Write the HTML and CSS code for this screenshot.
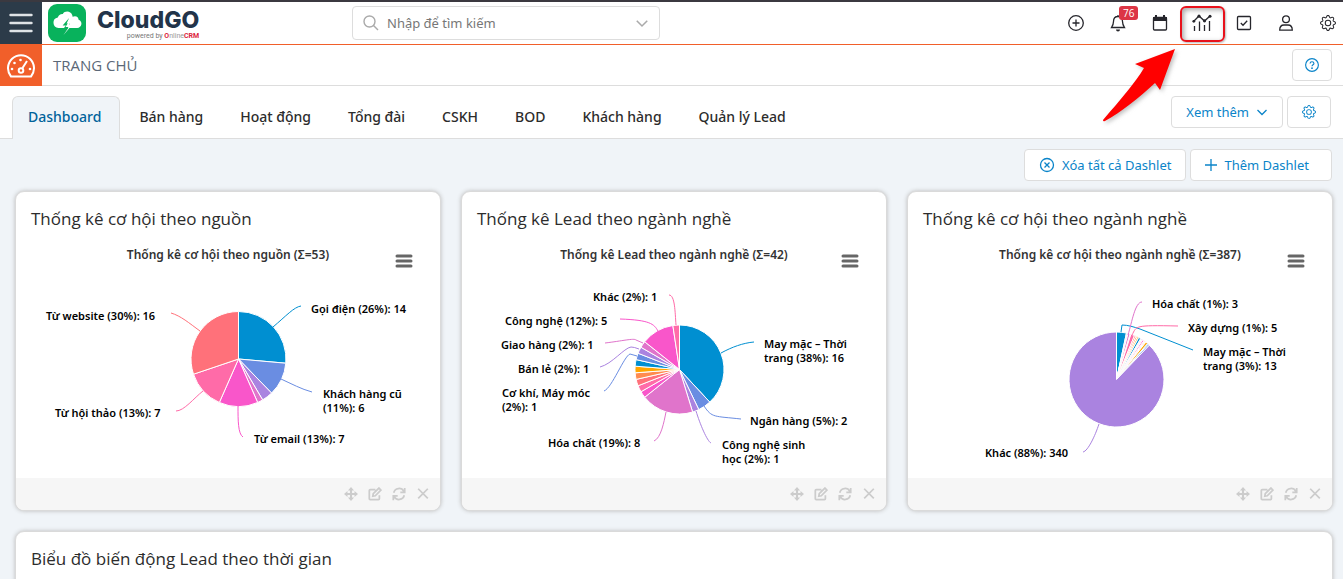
FILE: index.html
```html
<!DOCTYPE html>
<html lang="vi">
<head>
  <meta charset="UTF-8">
  <title>CloudGO - Trang chủ</title>
  <link rel="stylesheet" href="styles.css">
</head>
<body>
  <!-- shared icons -->
  <svg class="sprite" aria-hidden="true">
    <symbol id="i-gear" viewBox="0 0 16 16">
      <path d="M8 4.754a3.246 3.246 0 1 0 0 6.492 3.246 3.246 0 0 0 0-6.492zM5.754 8a2.246 2.246 0 1 1 4.492 0 2.246 2.246 0 0 1-4.492 0z"/>
      <path d="M9.796 1.343c-.527-1.79-3.065-1.79-3.592 0l-.094.319a.873.873 0 0 1-1.255.52l-.292-.16c-1.64-.892-3.433.902-2.54 2.541l.159.292a.873.873 0 0 1-.52 1.255l-.319.094c-1.79.527-1.79 3.065 0 3.592l.319.094a.873.873 0 0 1 .52 1.255l-.16.292c-.892 1.64.901 3.434 2.541 2.54l.292-.159a.873.873 0 0 1 1.255.52l.094.319c.527 1.79 3.065 1.79 3.592 0l.094-.319a.873.873 0 0 1 1.255-.52l.292.16c1.64.893 3.434-.902 2.54-2.541l-.159-.292a.873.873 0 0 1 .52-1.255l.319-.094c1.79-.527 1.79-3.065 0-3.592l-.319-.094a.873.873 0 0 1-.52-1.255l.16-.292c.893-1.64-.902-3.433-2.541-2.54l-.292.159a.873.873 0 0 1-1.255-.52l-.094-.319zm-2.633.283c.246-.835 1.428-.835 1.674 0l.094.319a1.873 1.873 0 0 0 2.693 1.115l.291-.16c.764-.415 1.6.42 1.184 1.185l-.159.292a1.873 1.873 0 0 0 1.116 2.692l.318.094c.835.246.835 1.428 0 1.674l-.319.094a1.873 1.873 0 0 0-1.115 2.693l.16.291c.415.764-.42 1.6-1.185 1.184l-.291-.159a1.873 1.873 0 0 0-2.693 1.116l-.094.318c-.246.835-1.428.835-1.674 0l-.094-.319a1.873 1.873 0 0 0-2.692-1.115l-.292.16c-.764.415-1.6-.42-1.184-1.185l.159-.291A1.873 1.873 0 0 0 1.945 8.93l-.319-.094c-.835-.246-.835-1.428 0-1.674l.319-.094A1.873 1.873 0 0 0 3.06 4.377l-.16-.292c-.415-.764.42-1.6 1.185-1.184l.292.159a1.873 1.873 0 0 0 2.692-1.115l.094-.319z"/>
    </symbol>
    <symbol id="i-chevron" viewBox="0 0 12 12"><path class="line" d="M1.500 4 6 8.500 10.500 4"/></symbol>
    <symbol id="i-move" viewBox="0 0 16 16"><path d="M8 0l3.500 4H9.200v2.800H12V4.500L16 8l-4 3.500V9.200H9.200V12h2.300L8 16l-3.500-4h2.300V9.200H4v2.300L0 8l4-3.500v2.300h2.800V4H4.500z"/></symbol>
    <symbol id="i-edit" viewBox="0 0 16 16"><path class="line thick" d="M8.500 3H2.500Q1.500 3 1.500 4v9.500q0 1 1 1H12q1 0 1-1V9.500M5.500 10.500l.500-2.800L12.500 1.200l2.300 2.300L8.300 10z"/></symbol>
    <symbol id="i-refresh" viewBox="0 0 16 16"><path class="line thick" d="M2 6.500A6.200 6.200 0 0 1 13.500 5M14.500 1v5h-5M14 9.500A6.200 6.200 0 0 1 2.500 11M1.500 15v-5h5"/></symbol>
    <symbol id="i-close" viewBox="0 0 16 16"><path class="line thick" d="M2.500 2 13.500 13M13.500 2 2.500 13"/></symbol>
  </svg>

  <header class="topbar">
    <button class="menu-toggle" aria-label="Menu">
      <svg width="24" height="20" viewBox="0 0 24 20"><path d="M1.500 2h21M1.500 10h21M1.500 18h21"/></svg>
    </button>
    <a class="brand" href="#">
      <svg class="brand-logo" width="38" height="38" viewBox="0 0 38 38">
        <rect width="38" height="38" rx="9" fill="#08b25c"/>
        <path fill="#fff" d="M10.500 24a5.300 5.300 0 0 1-.700-10.500 5 5 0 0 1 5-3.500c2-3.500 8-3.300 9.500 1.200l.300 1.500c3.500-1.500 6 .500 6 3 4.500 1.500 3.500 8-1.500 8.300h-9l1.500-4.500h-3l2.500-5.500-6.500 7.500h3.200L16 24z"/>
        <path fill="#fff" d="M15.500 31l5.500-8h-3.500l4.500-7-1 5h3z"/>
      </svg>
      <span class="brand-text">
        <span class="brand-name">CloudGO</span>
        <span class="brand-by">powered by <b>O</b><i>nline</i><b>CRM</b></span>
      </span>
    </a>
    <label class="search">
      <svg width="16" height="16" viewBox="0 0 16 16"><circle cx="6.500" cy="6.500" r="5.500"/><path d="M10.500 10.500 15 15"/></svg>
      <input type="text" placeholder="Nhập để tìm kiếm" aria-label="Nhập để tìm kiếm">
      <svg width="14" height="14"><use href="#i-chevron"/></svg>
    </label>
    <nav class="actions">
      <button aria-label="Thêm nhanh"><svg width="16" height="16" viewBox="0 0 16 16"><path class="line" d="M8 4.500v7M4.500 8h7"/><circle class="line" cx="8" cy="8" r="7.300"/></svg></button>
      <button aria-label="Thông báo"><svg width="16" height="18" viewBox="0 0 16 18"><path class="line" d="M8 2.500c-3 0-4.500 2-4.500 5 0 3-1 4.500-2 6h13c-1-1.500-2-3-2-6 0-3-1.500-5-4.500-5zM8 1v1.500"/><path d="M6 15.500h4a2 2 0 0 1-4 0z"/></svg><span class="badge">76</span></button>
      <button aria-label="Lịch"><svg width="16" height="16" viewBox="0 0 16 16"><rect class="line" x="1.500" y="2.500" width="13" height="12.500" rx="1"/><path d="M1 2h14v4H1zM3 0h2v3H3zM11 0h2v3h-2z"/></svg></button>
      <button class="highlighted" aria-label="Báo cáo"><svg width="20" height="18" viewBox="0 0 20 18"><path class="line" d="M1.500 7.500 7 2l5.500 5L18 2"/><circle cx="1.800" cy="7.300" r="1.400"/><circle cx="7" cy="2.200" r="1.600"/><circle cx="12.500" cy="6.800" r="1.600"/><circle cx="18" cy="2.200" r="1.500"/><path class="line" d="M2.500 17v-5M7.500 17V7.500M12.500 17v-6M17.500 17V7"/></svg></button>
      <button aria-label="Công việc"><svg width="16" height="16" viewBox="0 0 16 16"><rect class="line" x="1.500" y="1.500" width="13" height="13" rx="1"/><path class="line" d="M4.800 8 7 10.200l4.200-4.500"/></svg></button>
      <button aria-label="Tài khoản"><svg width="16" height="16" viewBox="0 0 16 16"><circle class="line" cx="8" cy="4.200" r="3.400"/><path class="line" d="M1.700 15.200c0-3.400 2-5.200 4.300-5.200h4c2.300 0 4.300 1.800 4.300 5.200z"/></svg></button>
      <button aria-label="Cài đặt"><svg width="16" height="16"><use href="#i-gear"/></svg></button>
    </nav>
    <svg class="pointer" width="90" height="90" viewBox="0 0 90 90"><path d="M77 4 37 19l9 4C37 38 23 54 5 75q0 2 2 1C23 67 41 53 57 38l5 7z"/></svg>
  </header>

  <div class="modulebar">
    <a class="module-icon" href="#" aria-label="Trang chủ">
      <svg width="28" height="24" viewBox="0 0 28 24">
        <path d="M4 22.500A13 13 0 1 1 24 22.500zM15.500 14 20 7"/>
        <circle cx="14" cy="16.500" r="2.300"/>
        <g class="dots"><circle cx="5" cy="15" r="1.300"/><circle cx="7.500" cy="9" r="1.300"/><circle cx="13.500" cy="6" r="1.300"/><circle cx="23" cy="15" r="1.300"/></g>
      </svg>
    </a>
    <span class="module-name">TRANG CHỦ</span>
    <button class="btn btn-help" aria-label="Trợ giúp">
      <svg width="14" height="14" viewBox="0 0 16 16"><circle class="line" cx="8" cy="8" r="7.300"/><path class="line" d="M5.800 6.300C5.900 3.500 10.200 3.700 10.200 6.200 10.200 7.700 8 7.700 8 9.300"/><circle cx="8" cy="11.700" r="1"/></svg>
    </button>
  </div>

  <div class="tabbar">
    <nav class="tabs">
      <a class="active" href="#">Dashboard</a>
      <a href="#">Bán hàng</a>
      <a href="#">Hoạt động</a>
      <a href="#">Tổng đài</a>
      <a href="#">CSKH</a>
      <a href="#">BOD</a>
      <a href="#">Khách hàng</a>
      <a href="#">Quản lý Lead</a>
    </nav>
    <div class="tab-tools">
      <button class="btn btn-more">Xem thêm <svg width="12" height="12"><use href="#i-chevron"/></svg></button>
      <button class="btn btn-gear" aria-label="Tùy chỉnh"><svg width="14" height="14"><use href="#i-gear"/></svg></button>
    </div>
  </div>

  <main class="dashboard">
    <div class="toolbar">
      <button class="btn"><svg width="16" height="16" viewBox="0 0 16 16"><circle class="line" cx="8" cy="8" r="6.500"/><path class="line" d="M5.500 5.500l5 5M10.500 5.500l-5 5"/></svg> Xóa tất cả Dashlet</button>
      <button class="btn btn-add"><svg width="12" height="12" viewBox="0 0 12 12"><path class="line" d="M6 0v12M0 6h12"/></svg> Thêm Dashlet</button>
    </div>

    <div class="cards">
      <section class="card">
        <h2>Thống kê cơ hội theo nguồn</h2>
        <div class="chart">
          <button class="chart-menu" aria-label="Menu biểu đồ"><svg width="18" height="14" viewBox="0 0 18 14"><path d="M2 2h14M2 7h14M2 12h14"/></svg></button>
          <svg class="pie" viewBox="0 0 424 238">
            <text class="chart-title" x="212" y="19">Thống kê cơ hội theo nguồn (Σ=53)</text>
            <g class="slices" data-cx="222.500" data-cy="119" data-r="47.500" data-values="14,6,2,1,7,7,16"></g>
            <path class="c0" d="M257 87C270 76 278 67 285 66"/>
            <path class="c1" d="M265 139C276 144 285 149 296 152"/>
            <path class="c4" d="M222 166C222 180 222 194 227 197"/>
            <path class="c5" d="M187 151C178 158 168 171 160 171"/>
            <path class="c6" d="M155 73C165 76 173 83 184 91"/>
            <text x="295" y="73">Gọi điện (26%): 14</text>
            <text x="307" y="158">Khách hàng cũ<tspan x="307" dy="14">(11%): 6</tspan></text>
            <text x="238" y="203">Từ email (13%): 7</text>
            <text x="39" y="177">Từ hội thảo (13%): 7</text>
            <text x="30" y="80">Từ website (30%): 16</text>
          </svg>
        </div>
        <footer>
          <button aria-label="Di chuyển"><svg><use href="#i-move"/></svg></button>
          <button aria-label="Sửa"><svg><use href="#i-edit"/></svg></button>
          <button aria-label="Làm mới"><svg><use href="#i-refresh"/></svg></button>
          <button aria-label="Đóng"><svg><use href="#i-close"/></svg></button>
        </footer>
      </section>

      <section class="card">
        <h2>Thống kê Lead theo ngành nghề</h2>
        <div class="chart">
          <button class="chart-menu" aria-label="Menu biểu đồ"><svg width="18" height="14" viewBox="0 0 18 14"><path d="M2 2h14M2 7h14M2 12h14"/></svg></button>
          <svg class="pie" viewBox="0 0 424 238">
            <text class="chart-title" x="212" y="19">Thống kê Lead theo ngành nghề (Σ=42)</text>
            <g class="slices" data-cx="217.500" data-cy="129.500" data-r="44.500" data-values="16,2,1,8,1,1,1,1,1,1,1,1,1,5,1"></g>
            <path class="c0" d="M259 113C270 107 281 103 292 102"/>
            <path class="c1" d="M242 166C250 178 252 176 279 179"/>
            <path class="c2" d="M234 171C238 184 245 201 249 203"/>
            <path class="c3" d="M192 201C199 198 202 182 204 172"/>
            <path class="c1" d="M142 151C150 148 162 116 168 114L175 116"/>
            <path class="c2" d="M138 127C150 124 162 108 169 107Q172 107 177 109"/>
            <path class="c3" d="M143 103C160 101 172 98 174 100L181 103"/>
            <path class="c4" d="M158 79C188 80 192 84 196 91"/>
            <path class="c5" d="M207 55C213 55 213 72 214 85"/>
            <text x="302" y="108">May mặc – Thời<tspan x="302" dy="14">trang (38%): 16</tspan></text>
            <text x="288" y="185">Ngân hàng (5%): 2</text>
            <text x="260" y="209">Công nghệ sinh<tspan x="260" dy="14">học (2%): 1</tspan></text>
            <text x="86" y="207">Hóa chất (19%): 8</text>
            <text x="40" y="157">Cơ khí, Máy móc<tspan x="40" dy="14">(2%): 1</tspan></text>
            <text x="56" y="133">Bán lẻ (2%): 1</text>
            <text x="39" y="109">Giao hàng (2%): 1</text>
            <text x="43" y="85">Công nghệ (12%): 5</text>
            <text x="131" y="61">Khác (2%): 1</text>
          </svg>
        </div>
        <footer>
          <button aria-label="Di chuyển"><svg><use href="#i-move"/></svg></button>
          <button aria-label="Sửa"><svg><use href="#i-edit"/></svg></button>
          <button aria-label="Làm mới"><svg><use href="#i-refresh"/></svg></button>
          <button aria-label="Đóng"><svg><use href="#i-close"/></svg></button>
        </footer>
      </section>

      <section class="card">
        <h2>Thống kê cơ hội theo ngành nghề</h2>
        <div class="chart">
          <button class="chart-menu" aria-label="Menu biểu đồ"><svg width="18" height="14" viewBox="0 0 18 14"><path d="M2 2h14M2 7h14M2 12h14"/></svg></button>
          <svg class="pie" viewBox="0 0 424 238">
            <text class="chart-title" x="212" y="19">Thống kê cơ hội theo ngành nghề (Σ=387)</text>
            <g class="slices" data-cx="208.500" data-cy="139.500" data-r="47.500" data-values="13,1,1,3,1,5,2,2,2,3,1,1,1,2,1,1,1,3,1,2,340"></g>
            <path class="c0" d="M213 92L214 85C220 85 226 87 232 89L285 110"/>
            <path class="c5" d="M270 86C225 85 229 86 224 95"/>
            <path class="c3" d="M234 62C227 62 224 82 220 95"/>
            <path class="c2" d="M175 212C180 211 187 196 191 184"/>
            <text x="244" y="68">Hóa chất (1%): 3</text>
            <text x="280" y="92">Xây dựng (1%): 5</text>
            <text x="295" y="116">May mặc – Thời<tspan x="295" dy="14">trang (3%): 13</tspan></text>
            <text x="77" y="217">Khác (88%): 340</text>
          </svg>
        </div>
        <footer>
          <button aria-label="Di chuyển"><svg><use href="#i-move"/></svg></button>
          <button aria-label="Sửa"><svg><use href="#i-edit"/></svg></button>
          <button aria-label="Làm mới"><svg><use href="#i-refresh"/></svg></button>
          <button aria-label="Đóng"><svg><use href="#i-close"/></svg></button>
        </footer>
      </section>

      <section class="card card-wide">
        <h2>Biểu đồ biến động Lead theo thời gian</h2>
      </section>
    </div>
  </main>

  <script src="script.js"></script>
</body>
</html>
```

FILE: styles.css
```css
* {
  box-sizing: border-box;
}
body {
  margin: 0;
  height: 100vh;
  overflow: hidden;
  background: #f0f4f8;
  color: #2c2c2c;
  font: 14px/20px "Open Sans", "Noto Sans", sans-serif;
}
a {
  color: inherit;
  text-decoration: none;
}
button {
  padding: 0;
  border: 0;
  background: none;
  color: inherit;
  font: inherit;
  cursor: pointer;
}
svg {
  display: block;
  fill: currentColor;
}
.sprite {
  position: absolute;
  width: 0;
  height: 0;
}
.line {
  fill: none;
  stroke: currentColor;
  stroke-width: 1.3;
}
.thick {
  stroke-width: 2;
}

/* top bar */
.topbar {
  position: relative;
  display: flex;
  align-items: center;
  height: 45px;
  border-top: 2px solid #3b3940;
  border-bottom: 1px solid #f15f2a;
  background: #fff;
}
.menu-toggle {
  display: flex;
  align-items: center;
  justify-content: center;
  width: 42px;
  height: 42px;
  background: #2c3b49;
}
.menu-toggle path {
  stroke: #dfe3e6;
  stroke-width: 2.4;
  stroke-linecap: round;
}
.brand {
  display: flex;
  width: 310px;
  padding-left: 6px;
  gap: 11px;
}
.brand-logo {
  margin-top: -1px;
}
.brand-text {
  display: flex;
  flex-direction: column;
  padding-top: 4px;
}
.brand-name {
  color: #22344a;
  font: 800 23px/22px Inter, sans-serif;
}
.brand-by {
  color: #777;
  font: 7px/10px Roboto, sans-serif;
  text-align: right;
}
.brand-by b {
  color: #dc1f3c;
}
.brand-by i {
  color: #999;
  font-style: normal;
}
.search {
  display: flex;
  align-items: center;
  width: 308px;
  height: 34px;
  padding: 0 10px;
  border: 1px solid #ddd;
  border-radius: 4px;
  color: #aaa;
}
.search circle,
.search path {
  fill: none;
  stroke: #aaa;
  stroke-width: 1.4;
}
.search input {
  flex: 1;
  min-width: 0;
  padding: 0 8px;
  border: 0;
  outline: 0;
  font: 13px "Noto Sans", sans-serif;
}
.search input::placeholder {
  color: #777;
}
.actions {
  display: flex;
  gap: 12px;
  margin-left: auto;
  color: #26262c;
}
.actions button {
  position: relative;
  display: flex;
  align-items: center;
  justify-content: center;
  width: 30px;
  height: 34px;
}
.badge {
  position: absolute;
  top: 0;
  left: 16px;
  padding: 0 4px;
  border-radius: 3px;
  background: #dc3545;
  color: #fff;
  font-size: 10px;
  line-height: 14px;
}
.highlighted::after {
  content: "";
  position: absolute;
  inset: 0 -8px -2px -7px;
  border: 2px solid #e8111b;
  border-radius: 6px;
  box-shadow: inset 2px 2px 5px #aaa, 1px 1px 2px #bbb;
}
.pointer {
  position: absolute;
  top: 43px;
  right: 155px;
  z-index: 2;
  fill: #f00;
  filter: drop-shadow(2px 2px 2px #8888);
}

/* module bar */
.modulebar {
  display: flex;
  align-items: center;
  height: 41px;
  padding-right: 11px;
  border-bottom: 1px solid #ddd;
  background: #fff;
}
.module-icon {
  display: flex;
  align-items: center;
  justify-content: center;
  align-self: flex-start;
  width: 42px;
  height: 41px;
  background: #f15f2a;
}
.module-icon path,
.module-icon circle {
  fill: none;
  stroke: #fff;
  stroke-width: 2;
}
.module-icon .dots circle {
  fill: #fff;
  stroke: none;
}
.module-name {
  margin-left: 11px;
  color: #5b6877;
  font-size: 15px;
}
.btn {
  display: flex;
  align-items: center;
  justify-content: center;
  gap: 7px;
  height: 32px;
  padding: 0 14px;
  border: 1px solid #ddd;
  border-radius: 4px;
  background: #fff;
  color: #0a84c9;
  font: 13px "Noto Sans", sans-serif;
}
.btn-help {
  width: 40px;
  margin-left: auto;
  padding: 0;
}

/* tabs */
.tabbar {
  display: flex;
  justify-content: space-between;
  align-items: flex-start;
  height: 53px;
  padding: 10px 12px 0;
  border-bottom: 1px solid #ddd;
  background: #fff;
}
.tabs {
  display: flex;
  gap: 1px;
}
.tabs a {
  height: 43px;
  padding: 0 17px;
  border: 1px solid transparent;
  font: 500 14px/40px "Noto Sans", sans-serif;
}
.tabs .active {
  padding: 0 18px 0 15px;
  border-color: #ddd;
  border-bottom: 0;
  border-radius: 6px 6px 0 0;
  background: #f0f4f8;
  color: #00639b;
}
.tab-tools {
  display: flex;
  gap: 4px;
}
.btn-gear {
  width: 44px;
}

/* dashboard */
.toolbar {
  display: flex;
  justify-content: flex-end;
  gap: 4px;
  padding: 10px 11px;
}
.btn-add {
  padding: 0 22px 0 14px;
}
.cards {
  display: grid;
  grid-template-columns: repeat(3, 1fr);
  gap: 20px;
  padding: 0 10px 0 15px;
}
.card {
  overflow: hidden;
  border: 1px solid #dadada;
  border-radius: 9px;
  background: #fff;
  box-shadow: 0 0 4px #bbb;
}
.card-wide {
  grid-column: 1 / -1;
  padding-bottom: 200px;
}
.card h2 {
  margin: 0;
  padding: 15px 15px 9px;
  font-size: 17px;
  font-weight: 500;
  line-height: 24px;
}
.card footer {
  display: flex;
  justify-content: flex-end;
  gap: 10px;
  height: 32px;
  padding: 0 10px;
  background: #f6f6f6;
  color: #ccc;
}
.card footer svg {
  width: 14px;
  height: 14px;
}
.chart {
  position: relative;
}
.chart-menu {
  position: absolute;
  top: 14px;
  right: 27px;
}
.chart-menu path {
  stroke: #666;
  stroke-width: 3;
  stroke-linecap: round;
}
.pie {
  width: 100%;
}
.pie text {
  fill: #000;
  font: 600 11px "Noto Sans", sans-serif;
}
.pie .chart-title {
  fill: #333;
  font-size: 12px;
  text-anchor: middle;
}
.pie > path {
  fill: none;
}
.slices path {
  stroke: #fff;
  stroke-linejoin: round;
}

/* series colours */
.c0 { fill: #008fd1; stroke: #008fd1; }
.c1 { fill: #6a8de2; stroke: #6a8de2; }
.c2 { fill: #aa83e0; stroke: #aa83e0; }
.c3 { fill: #e074cb; stroke: #e074cb; }
.c4 { fill: #f956ca; stroke: #f956ca; }
.c5 { fill: #ff6ba8; stroke: #ff6ba8; }
.c6 { fill: #ff717a; stroke: #ff717a; }
.c7 { fill: #ff8b4f; stroke: #ff8b4f; }
.c8 { fill: #ffa600; stroke: #ffa600; }
```

FILE: script.js
```js
// Draw the pie slices, clockwise from the top
document.querySelectorAll('.slices').forEach(function (group) {
  var cx = Number(group.dataset.cx);
  var cy = Number(group.dataset.cy);
  var r = Number(group.dataset.r);
  var values = group.dataset.values.split(',').map(Number);
  var total = values.reduce(function (a, b) { return a + b; });
  var sum = 0;

  function point(value) {
    var angle = value / total * 2 * Math.PI;
    return (cx + r * Math.sin(angle)) + ' ' + (cy - r * Math.cos(angle));
  }

  values.forEach(function (value, i) {
    var path = document.createElementNS('http://www.w3.org/2000/svg', 'path');
    var large = value > total / 2 ? 1 : 0;
    path.setAttribute('d', 'M' + cx + ' ' + cy + 'L' + point(sum) +
      'A' + r + ' ' + r + ' 0 ' + large + ' 1 ' + point(sum + value) + 'Z');
    path.setAttribute('class', 'c' + i % 9);
    group.appendChild(path);
    sum += value;
  });
});
```
